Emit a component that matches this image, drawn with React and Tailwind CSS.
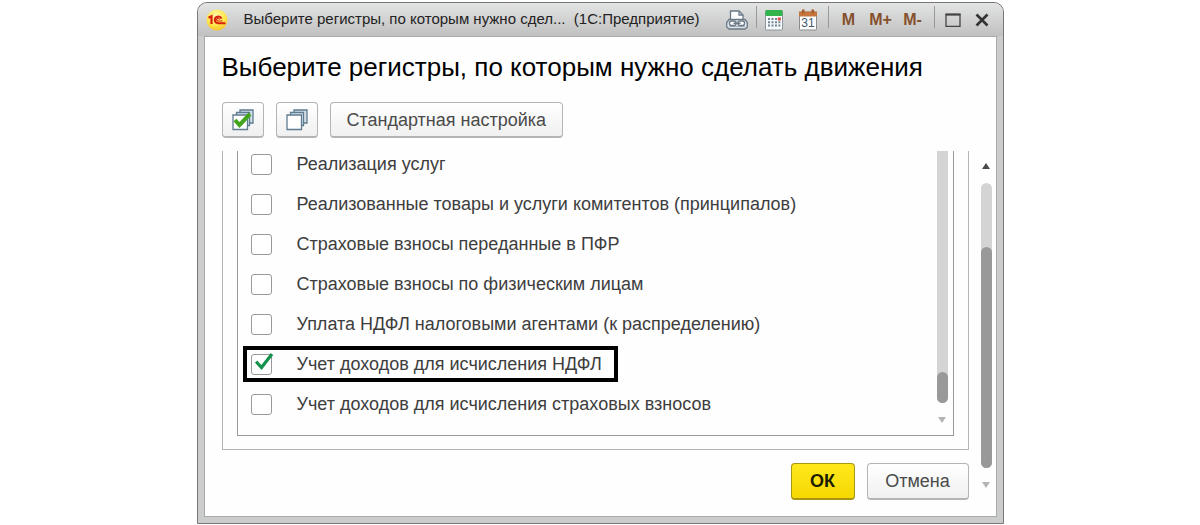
import { useState } from "react";

const REGISTERS = [
  { id: "sales", label: "Реализация услуг" },
  { id: "consignor", label: "Реализованные товары и услуги комитентов (принципалов)" },
  { id: "pfr", label: "Страховые взносы переданные в ПФР" },
  { id: "persons", label: "Страховые взносы по физическим лицам" },
  { id: "agents", label: "Уплата НДФЛ налоговыми агентами (к распределению)" },
  { id: "income", label: "Учет доходов для исчисления НДФЛ", marked: true },
  { id: "insurance", label: "Учет доходов для исчисления страховых взносов" },
];

const LogoIcon = () => (
  <svg viewBox="0 0 22 22" className="h-[22px] w-[22px] shrink-0" fill="none">
    <defs>
      <radialGradient id="logo" cx="0.45" cy="0.3" r="0.75">
        <stop offset="0" stopColor="#fff9a8" />
        <stop offset="0.6" stopColor="#ffe64a" />
        <stop offset="1" stopColor="#f3bd2a" />
      </radialGradient>
    </defs>
    <circle cx="11" cy="11" r="10.5" fill="url(#logo)" />
    <path d="M2.500 8.800 5.500 7.300V15" stroke="#d8200e" strokeWidth="2.200" />
    <path d="M15.500 9.600A3.500 3.300 0 1 0 12 14.200H19.500" stroke="#d8200e" strokeWidth="2" />
    <path d="M13.500 10.600a1.400 1.400 0 1 0-1.300 1.400h4.300" stroke="#d8200e" strokeWidth="1.200" />
  </svg>
);

const PrinterIcon = () => (
  <svg viewBox="0 0 24 22" className="h-[22px] w-6" fill="none" stroke="#6b7886" strokeWidth="1.3">
    <path d="M5.5 11V2H14l4 4v5" fill="#fff" />
    <path d="M14 2v4h4" />
    <path d="M4 10.500h16l2.300 3V18L20 20H4l-2.300-2v-4.500z" fill="#dfe4e9" />
    <path d="M4 17.500h16" stroke="#a3adb6" strokeWidth="1" />
    <rect x="4.500" y="12" width="6.500" height="4.500" rx="2" fill="#fff" />
    <rect x="13" y="12" width="6.500" height="4.500" rx="2" fill="#fff" />
    <path d="M8.500 14.300h7" strokeWidth="1.500" />
  </svg>
);

const CalculatorIcon = () => (
  <svg viewBox="0 0 18 22" className="h-[22px] w-[18px]">
    <rect x="0.500" y="1.500" width="17" height="19.500" rx="1" fill="#f7f9fa" stroke="#8b969e" />
    <rect x="0.500" y="1" width="17" height="6" rx="1" fill="#31b44b" />
    <path
      d="M3 9h2v2H3zM6.500 9h2v2h-2zM10 9h2v2h-2zM13.300 9h2v2h-2zM3 12.300h2v2H3zM6.500 12.300h2v2h-2zM10 12.300h2v2h-2zM13.300 12.300h2v2h-2zM3 15.600h2v2H3zM6.500 15.600h2v2h-2zM10 15.600h2v2h-2zM13.300 15.600h2v2h-2z"
      fill="#6d8494"
    />
    <path d="M12.800 8.500h3v3h-3z" fill="#e04b45" />
  </svg>
);

const CalendarIcon = () => (
  <svg viewBox="0 0 18 22" className="h-[22px] w-[18px]">
    <rect x="0.500" y="3" width="17" height="18" rx="1" fill="#fff" stroke="#8b8b8b" />
    <path d="M0 2.500h18v5H0z" fill="#c5763d" />
    <path d="M3 0.500h2.500v4H3zM12.500 0.500H15v4h-2.500z" fill="#a75c28" />
    <text x="9" y="18" textAnchor="middle" fontSize="12" fontWeight="400" fill="#40566a" fontFamily="Liberation Sans, sans-serif">
      31
    </text>
  </svg>
);

const StackIcon = ({ checked }) => (
  <svg viewBox="0 0 22 22" className="h-[22px] w-[22px]" strokeWidth="1.3" stroke="#5d7b91">
    <path d="M8 1h13v13H8z" fill="#d5dfe6" />
    <path d="M4.500 3.500h13v13h-13z" fill="#dfe7ec" />
    <path d="M1 6h14.500v14.500H1z" fill="#fff" />
    {checked && (
      <path d="M3 11 7.500 16 18 5" fill="none" stroke="#43a51c" strokeWidth="4" />
    )}
  </svg>
);

const Triangle = ({ up }) => (
  <svg viewBox="0 0 8 6" className="h-[6px] w-2">
    {up ? <path d="M4 0 8 6H0z" fill="#4a4a4a" /> : <path d="M0 0h8L4 6z" fill="#b4b4b4" />}
  </svg>
);

const Divider = () => <span className="mt-[3px] h-[22px] w-px self-start bg-[#999]" />;

const buttonBase =
  "rounded-[4px] border border-b-2 border-[#b4b4b4] bg-gradient-to-b from-white to-[#f0f0f0] text-[#4a4a4a] flex items-center justify-center";

function TitleBar() {
  return (
    <header className="flex h-[33px] items-center bg-gradient-to-b from-[#e3e4e4] to-[#c0c0c0] pl-2 pr-[14px]">
      <LogoIcon />
      <span className="ml-4 min-w-0 truncate whitespace-pre text-[15px] text-[#222]">
        Выберите регистры, по которым нужно сдел...  (1С:Предприятие)
      </span>
      <div className="ml-auto flex h-full shrink-0 items-center text-base font-bold text-[#85502c]">
        <button aria-label="Печать"><PrinterIcon /></button>
        <span className="flex h-full w-4 justify-center"><Divider /></span>
        <button aria-label="Калькулятор"><CalculatorIcon /></button>
        <button aria-label="Календарь" className="ml-4"><CalendarIcon /></button>
        <span className="flex h-full w-6 justify-center"><Divider /></span>
        <button className="w-4">M</button>
        <button className="ml-3 w-6">M+</button>
        <button className="ml-2 w-6">M-</button>
        <span className="flex h-full w-5 justify-center"><Divider /></span>
        <button aria-label="Развернуть">
          <svg viewBox="0 0 16 14" className="h-[14px] w-4" fill="none" stroke="#444">
            <path d="M1 1.500h14v12H1z" strokeWidth="1.300" />
            <path d="M0.500 1.500h15" strokeWidth="2" />
          </svg>
        </button>
        <button aria-label="Закрыть" className="ml-[14px]">
          <svg viewBox="0 0 14 14" className="h-[14px] w-[14px]" stroke="#333" strokeWidth="2.600">
            <path d="m1.500 1.500 11 11M12.500 1.500l-11 11" />
          </svg>
        </button>
      </div>
    </header>
  );
}

function RegisterRow({ item, checked, onChange }) {
  return (
    <li className="flex">
      <label className="relative flex h-6 items-center gap-[25px] pr-2 text-lg text-[#3d3d3d]">
        <span className="relative flex">
          <input
            type="checkbox"
            checked={checked}
            onChange={onChange}
            className="h-[21px] w-[21px] appearance-none rounded-[3px] border border-[#999] bg-white"
          />
          {checked && (
            <svg
              viewBox="0 0 22 20"
              className="pointer-events-none absolute -top-[2px] left-1 h-5 w-[22px]"
              fill="none"
              stroke="#12924b"
              strokeWidth="3.200"
            >
              <path d="M1 9.500 6.500 15.500 17 2" />
            </svg>
          )}
        </span>
        {item.label}
        {item.marked && (
          <span className="pointer-events-none absolute -inset-x-2 -inset-y-[6px] border-4 border-black" />
        )}
      </label>
    </li>
  );
}

export default function App() {
  const [selected, setSelected] = useState(["income"]);

  const toggle = (id) =>
    setSelected((prev) =>
      prev.includes(id) ? prev.filter((x) => x !== id) : [...prev, id]
    );

  return (
    <div className="min-h-screen bg-white pt-[2px] font-['Liberation_Sans',Arial,sans-serif]">
      <div className="mx-auto w-full max-w-[807px] overflow-hidden rounded-t-[10px] border border-[#777] bg-[#cbcccc]">
        <TitleBar />

        <main className="mx-[6px] mb-[6px] border border-[#aaa] bg-[#fefefe] pb-4 pl-[17px] pr-1">
          <h1 className="pt-3 text-[26px] leading-9 text-black">
            Выберите регистры, по которым нужно сделать движения
          </h1>

          {/* Toolbar */}
          <div className="mt-[17px] flex gap-3 text-lg">
            <button
              aria-label="Отметить все"
              className={`${buttonBase} h-9 w-[42px]`}
              onClick={() => setSelected(REGISTERS.map((r) => r.id))}
            >
              <StackIcon checked />
            </button>
            <button
              aria-label="Снять отметки"
              className={`${buttonBase} h-9 w-[42px]`}
              onClick={() => setSelected([])}
            >
              <StackIcon />
            </button>
            <button className={`${buttonBase} h-9 px-4`}>Стандартная настройка</button>
          </div>

          <div className="mt-[13px] flex">
            <div className="min-w-0 flex-1">
              {/* Register list */}
              <section className="border-x border-b border-[#b4b4b4] px-[14px] pb-[13px]">
                <div className="flex border-x border-b border-[#999] pl-[13px] pr-[5px]">
                  <ul className="flex flex-1 flex-col gap-4 pb-[19px] pt-px">
                    {REGISTERS.map((item) => (
                      <RegisterRow
                        key={item.id}
                        item={item}
                        checked={selected.includes(item.id)}
                        onChange={() => toggle(item.id)}
                      />
                    ))}
                  </ul>
                  <div className="flex w-[11px] flex-col items-center pb-3">
                    <div className="flex w-full flex-1 flex-col justify-end rounded-b-full bg-[#d4d4d4]">
                      <div className="h-[31px] rounded-full bg-[#999]" />
                    </div>
                    <div className="mt-[14px]"><Triangle /></div>
                  </div>
                </div>
              </section>

              {/* Actions */}
              <footer className="mt-[13px] flex justify-end gap-3 text-lg">
                <button className="h-[37px] w-16 rounded-[4px] border border-b-2 border-[#a89512] bg-gradient-to-b from-[#ffe81a] to-[#f6d800] font-bold text-[#1c1c00]">
                  ОК
                </button>
                <button className={`${buttonBase} h-[37px] w-[102px]`}>Отмена</button>
              </footer>
            </div>

            {/* Form scrollbar */}
            <div className="ml-3 flex w-[11px] flex-col items-center pb-3 pt-3">
              <Triangle up />
              <div className="mt-[14px] flex w-full flex-1 flex-col rounded-full bg-[#d4d4d4] pt-16">
                <div className="flex-1 rounded-full bg-[#999]" />
              </div>
              <div className="mt-[14px]"><Triangle /></div>
            </div>
          </div>
        </main>
      </div>
    </div>
  );
}
